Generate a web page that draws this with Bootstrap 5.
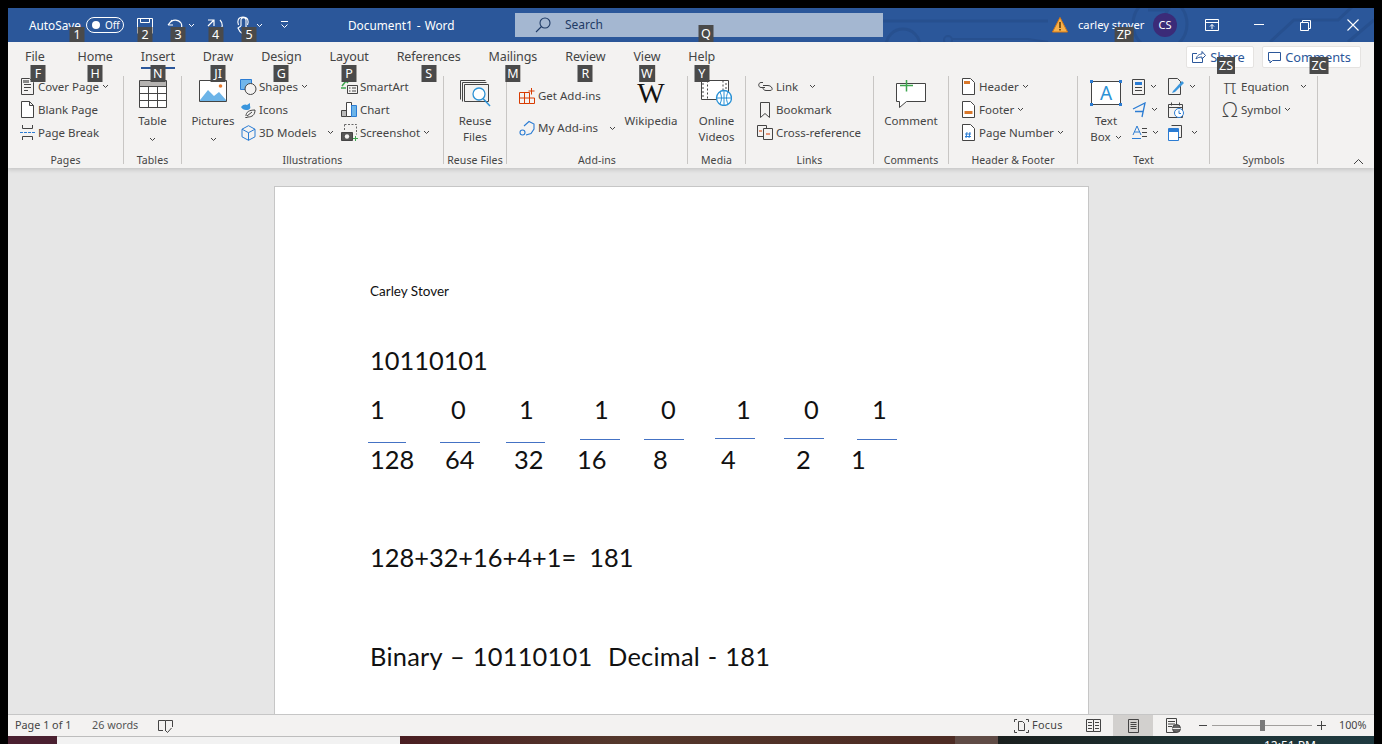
<!DOCTYPE html>
<html lang="en">
<head>
  <meta charset="UTF-8" />
  <meta name="viewport" content="width=device-width, initial-scale=1" />
  <title>Document1 - Word</title>
  <link href="https://cdn.jsdelivr.net/npm/bootstrap@5.3.0/dist/css/bootstrap.min.css" rel="stylesheet" />
  <style>
    html, body { height: 100%; }
    body { margin: 0; background: #000; overflow: hidden; font-family: "Noto Sans", "Open Sans", sans-serif; font-size: 11.5px; color: #444; }
    svg { display: block; flex: none; }
    .word-win { height: 744px; padding: 8px 8px 0; display: flex; flex-direction: column; }

    /* title bar */
    .title-bar { height: 34px; background: #2b579a; color: #fff; position: relative; flex: none; font-size: 11.8px; }
    .title-art { position: absolute; inset: 0; }
    .title-left { width: 507px; flex: none; height: 34px; position: relative; padding-left: 21px; }
    .auto-save { width: 57px; height: 34px; line-height: 34px; position: relative; }
    .off-pill { width: 38px; height: 16px; border: 1px solid #fff; border-radius: 8px; display: flex; align-items: center; gap: 5px; padding-left: 5px; font-size: 10px; line-height: 1; }
    .off-dot { width: 8px; height: 8px; border-radius: 50%; background: #fff; }
    .qat-item { position: relative; height: 34px; display: flex; align-items: center; gap: 5px; }
    .qat-save { margin-left: 13px; }
    .qat-undo { margin-left: 14px; }
    .qat-redo { margin-left: 12px; }
    .qat-touch { margin-left: 11px; }
    .qat-more { margin-left: 17px; }
    .doc-name { position: absolute; left: 340px; top: 0; line-height: 34px; word-spacing: -1px; }
    .search-box { width: 368px; flex: none; height: 24px; margin-top: 5px; background: #a4b7d1; color: #1f3b66; position: relative; display: flex; align-items: center; padding-left: 20px; gap: 14px; font-size: 12px; }
    .title-right { flex: 1; position: relative; height: 34px; }
    .warn-ico { margin-left: 169px; }
    .user-name { margin-left: 10px; width: 65px; height: 34px; line-height: 34px; white-space: nowrap; position: relative; font-size: 11.2px; }
    .user-chip { width: 24px; height: 24px; border-radius: 50%; background: #3b2b78; font-size: 11px; display: flex; align-items: center; justify-content: center; margin-left: 10px; margin-right: 28px; }
    .win-min { margin-left: 35px; }
    .win-max, .win-close { margin-left: 36px; }

    /* key tips */
    .ktip { position: absolute; left: 50%; transform: translateX(-50%); min-width: 15px; height: 16px; padding: 0 2px; background: #4a4a4a; color: #fff; font-size: 12.5px; line-height: 16px; text-align: center; z-index: 5; }
    .ktip-qat { top: 19px; height: 15px; line-height: 15px; }
    .ktip-auto { left: 48px; }
    .ktip-undo { left: 11px; }
    .ktip-touch { left: 14px; }
    .ktip-search { left: 191px; top: 12px; height: 17px; line-height: 17px; }
    .ktip-user { left: 46px; top: 19px; height: 15px; line-height: 15px; font-size: 12.5px; }
    .ktip-share { left: 39px; top: 10px; height: 17px; line-height: 17px; }
    .ktip-comm { left: 56px; top: 10px; height: 17px; line-height: 17px; }

    /* ribbon */
    .word-ribbon { height: 126px; background: #f3f2f1; flex: none; position: relative; box-shadow: 0 2px 4px rgba(0,0,0,.14); z-index: 2; }
    .tab-row { height: 34px; padding-left: 3px; }
    .tab-row .nav-item { position: relative; padding: 0 14px; height: 34px; line-height: 30px; font-size: 12.5px; color: #444; letter-spacing: -.1px; }
    .tab-row .nav-item:first-child { padding-right: 19px; }
    .tab-row .tab-on::after { content: ""; position: absolute; left: 14px; right: 14px; top: 25px; height: 2px; background: #2b579a; }
    .tab-row .ktip { top: 23px; height: 17px; line-height: 17px; letter-spacing: 0; }
    .tab-row .nav-item:first-child .ktip { left: 27px; }
    .top-btn { position: absolute; top: 4px; height: 22px; padding: 0; background: #fff; border: 1px solid #e5e3e1; border-radius: 2px; color: #2b579a; font-size: 12.8px; line-height: 20px; display: flex; align-items: center; justify-content: center; gap: 4px; }
    .top-btn:hover { background: #fff; color: #2b579a; }
    .btn-share { left: 1178px; width: 68px; }
    .btn-comm { left: 1254px; width: 99px; }
    .group-row { height: 88px; }
    .rgroup { display: flex; flex-direction: column; border-right: 1px solid #c8c6c4; flex: none; }
    .rgroup-body { flex: 1; display: flex; min-height: 0; }
    .rgroup-name { height: 16px; margin-bottom: -4px; line-height: 16px; text-align: center; font-size: 10.5px; color: #444; letter-spacing: .1px; }
    .g-pages { width: 116px; } .g-pages .rgroup-body { padding-left: 11px; }
    .g-tables { width: 58px; }
    .g-illus { width: 262px; } .g-illus .rgroup-body { padding-left: 10px; }
    .g-reuse { width: 63px; }
    .g-addins { width: 181px; } .g-addins .rgroup-body { padding-left: 12px; }
    .g-media { width: 58px; }
    .g-links { width: 128px; } .g-links .rgroup-body { padding-left: 11px; }
    .g-comm { width: 75px; }
    .g-head { width: 129px; } .g-head .rgroup-body { padding-left: 11px; }
    .g-text { width: 132px; } .g-text .rgroup-body { padding-left: 13px; }
    .g-symb { width: 108px; } .g-symb .rgroup-body { padding-left: 12px; }

    .small-col { display: flex; flex-direction: column; margin-top: -1px; }
    .small-btn { height: 23px; display: flex; align-items: center; white-space: nowrap; gap: 3px; }
    .ico-slot { width: 16px; height: 23px; display: flex; align-items: center; justify-content: center; flex: none; }
    .big-btn { display: flex; flex-direction: column; align-items: center; flex: 1; line-height: 16px; }
    .big-ico { height: 37px; display: flex; align-items: flex-start; justify-content: center; padding-top: 4px; }
    .col-shapes { width: 101px; margin-left: 6px; }
    .col-pictures { flex: none; width: 42px; }
    .addin-col { width: 101px; padding-top: 8px; }
    .addin-row { height: 24px; display: flex; align-items: center; gap: 3px; white-space: nowrap; }
    .addin-row + .addin-row { margin-top: 8px; }
    .col-wiki { flex: none; width: 62px; }
    .wiki-w { font-family: "Liberation Serif", serif; font-size: 29px; line-height: 28px; color: #111; height: 37px; padding-top: 3px; }
    .col-textbox { flex: none; width: 30px; }
    .tool-col { margin-left: 11px; width: 25px; } .tool-col + .tool-col { margin-left: 11px; width: 30px; }
    .tool-col .small-btn { gap: 5px; }
    .tool-col + .tool-col .small-btn { gap: 4px; }
    .sym-glyph { font-family: "Open Sans", sans-serif; font-size: 21px; line-height: 1; color: #444; font-weight: 300; }
    .collapse-ribbon { position: absolute; right: 10px; bottom: 3px; }

    /* document */
    .doc-area { flex: 1; min-height: 0; background: #e6e6e6; overflow: hidden; padding-top: 18px; display: flex; justify-content: center; padding-right: 19px; position: relative; }
    .doc-page { width: 815px; height: 700px; flex: none; background: #fff; border: 1px solid #c6c6c6; padding: 94px 0 0 95px; position: relative; color: #111; font-family: Lato, "Liberation Sans", sans-serif; }
    .doc-name-line { font-size: 13.5px; line-height: 20px; }
    .doc-big { font-size: 25.4px; line-height: 36px; white-space: pre; }
    .mt-first { margin-top: 41px; } .mt-bits { margin-top: 13px; } .mt-vals { margin-top: 14px; } .mt-sum { margin-top: 62px; } .mt-end { margin-top: 63px; letter-spacing: .25px; word-spacing: 1px; }
    .bit-row { display: grid; grid-template-columns: 81px 68px 75px 67px 75px 68px 68px 1fr; }
    .val-row { display: grid; grid-template-columns: 75px 69px 63px 76px 68px 75px 55px 1fr; }
    .doc-rules { position: absolute; left: 1px; top: 1px; }

    /* status bar */
    .status-bar { height: 22px; flex: none; background: #f3f2f1; border-top: 1px solid #c6c6c6; font-size: 10.8px; color: #444; position: relative; }
    .st-pages { margin-left: 7px; width: 77px; }
    .st-words { width: 66px; color: #555; }
    .st-right { margin-left: auto; height: 21px; padding-right: 5px; }
    .st-focus { gap: 3px; width: 72px; letter-spacing: .3px; }
    .st-read { width: 27px; }
    .st-print { width: 40px; height: 21px; background: #d2d0ce; display: flex; align-items: center; justify-content: center; }
    .st-web { width: 46px; padding-left: 13px; }
    .zoom-rail { width: 100px; height: 1px; background: #a19f9d; margin: 0 5px; position: relative; }
    .zoom-thumb { position: absolute; left: 48px; top: -5px; width: 5px; height: 11px; background: #7a7a7a; }
    .st-pct { margin-left: 13px; width: 30px; }

    /* taskbar */
    .task-strip { height: 8px; flex: none; display: flex; overflow: hidden; color: #fff; }
    .ts-a { width: 49px; background: #4a2030; }
    .ts-b { width: 343px; background: #f2f2f2; border-top: 1px solid #bdbdbd; }
    .ts-c { width: 555px; background: linear-gradient(90deg, #4a1e22, #54382c 40%, #4d2c24 90%); }
    .ts-d { width: 43px; background: #5f4b45; }
    .ts-e { flex: 1; background: linear-gradient(90deg, #1a1f1e, #1c2f30 45%, #1f3a40); position: relative; }
    .ts-clock { position: absolute; left: 266px; top: 3px; font-size: 12px; line-height: 14px; white-space: nowrap; }
  </style>
</head>
<body>
<div class="word-win">

  <!-- title bar -->
  <div class="title-bar d-flex">
    <svg class="title-art" width="1366" height="34" fill="none" stroke="#27508f" stroke-width="3">
      <path d="M875 13H1040" />
      <circle cx="895" cy="38" r="17" />
      <circle cx="940" cy="32" r="4" stroke-width="2" />
      <path d="M944 31H1020L1040 34" stroke-width="2" />
      <circle cx="1152" cy="16" r="27" />
      <path d="M1140 2H1160L1148 20" />
      <path d="M1262 34L1286 12H1330L1345 -2" />
      <path d="M1340 34L1366 12" />
    </svg>
    <div class="title-left d-flex align-items-center">
      <div class="auto-save">AutoSave<span class="ktip ktip-qat ktip-auto">1</span></div>
      <div class="off-pill"><span class="off-dot"></span><span>Off</span></div>
      <div class="qat-item qat-save">
        <svg width="16" height="17" fill="none" stroke="#fff"><path d="M.5 1.500H15.500V16.500M.5 1.500V16.500M3.500 1.500V5.500H12.500V1.500" /></svg>
        <span class="ktip ktip-qat">2</span>
      </div>
      <div class="qat-item qat-undo">
        <svg width="16" height="14" fill="none" stroke="#fff" stroke-width="1.2"><path d="M1 7L5 2M1 7H6M2 6C5 1 11 1 14 5C15 7 15 9 14 11" /></svg>
        <svg width="7" height="5" fill="none" stroke="#fff"><path d="M1 1L3.500 3.500L6 1" /></svg>
        <span class="ktip ktip-qat ktip-undo">3</span>
      </div>
      <div class="qat-item qat-redo">
        <svg width="17" height="15" fill="none" stroke="#fff" stroke-width="1.2"><path d="M1 2H7V8M7 2L1 8M13 2C16 5 16 10 13 13" /></svg>
        <span class="ktip ktip-qat">4</span>
      </div>
      <div class="qat-item qat-touch">
        <svg width="16" height="19" fill="none" stroke="#fff" stroke-width="1.1"><path d="M6 10V4C6 1 11 1 11 4V11M3.500 9C2 5 3 1 8 1S14 5 12.500 9M6 10L3 12C4 15 6 17 8 18M11 11L14 12L13 17" /></svg>
        <svg width="7" height="5" fill="none" stroke="#fff"><path d="M1 1L3.500 3.500L6 1" /></svg>
        <span class="ktip ktip-qat ktip-touch">5</span>
      </div>
      <div class="qat-item qat-more">
        <svg width="9" height="8" fill="none" stroke="#fff"><path d="M1 .5H8M1.500 3.500L4.500 6.500L7.500 3.500" /></svg>
      </div>
      <div class="doc-name">Document1 &nbsp;-&nbsp; Word</div>
    </div>
    <div class="search-box">
      <svg width="16" height="16" fill="none" stroke="#1f3b66" stroke-width="1.100"><circle cx="10" cy="6" r="5" /><path d="M6.500 9.500L1 15" /></svg>
      <span>Search</span>
      <span class="ktip ktip-search">Q</span>
    </div>
    <div class="title-right d-flex align-items-center">
      <svg class="warn-ico" width="16" height="16"><path d="M8 .5L15.500 15H.5Z" fill="#f7b14c" stroke="#d97a12" /><path d="M7.300 5H8.700V11H7.300ZM7.300 12H8.700V13.500H7.300Z" fill="#4a2d00" /></svg>
      <div class="user-name">carley stover<span class="ktip ktip-user">ZP</span></div>
      <div class="user-chip">CS</div>
      <svg width="14" height="12" fill="none" stroke="#fff"><path d="M.5 .5H13.500V11.500H.5ZM.5 3.500H13.500M7 10V5.500M5 7.500L7 5.500L9 7.500" /></svg>
      <svg class="win-min" width="10" height="2" fill="none" stroke="#fff"><path d="M0 .5H10" /></svg>
      <svg class="win-max" width="11" height="11" fill="none" stroke="#fff"><path d="M.5 2.500H8.500V10.500H.5ZM2.500 2.500V.5H10.500V8.500H8.500" /></svg>
      <svg class="win-close" width="12" height="12" fill="none" stroke="#fff" stroke-width="1.100"><path d="M.5 .5L11.500 11.500M11.500 .5L.5 11.500" /></svg>
    </div>
  </div>

  <!-- ribbon -->
  <div class="word-ribbon">
    <ul class="nav tab-row list-unstyled m-0">
      <li class="nav-item">File<span class="ktip">F</span></li>
      <li class="nav-item">Home<span class="ktip">H</span></li>
      <li class="nav-item tab-on">Insert<span class="ktip">N</span></li>
      <li class="nav-item">Draw<span class="ktip">JI</span></li>
      <li class="nav-item">Design<span class="ktip">G</span></li>
      <li class="nav-item">Layout<span class="ktip">P</span></li>
      <li class="nav-item">References<span class="ktip">S</span></li>
      <li class="nav-item">Mailings<span class="ktip">M</span></li>
      <li class="nav-item">Review<span class="ktip">R</span></li>
      <li class="nav-item">View<span class="ktip">W</span></li>
      <li class="nav-item">Help<span class="ktip">Y</span></li>
    </ul>
    <button class="btn top-btn btn-share">
      <svg width="15" height="14" fill="none" stroke="#2b579a"><path d="M6 3.500H1.500V12.500H11.500V8M5 9C6 5 9 4 11 4V1.500L14.500 5.500L11 9V7C8 7 6 8 5 9Z" /></svg>
      Share<span class="ktip ktip-share">ZS</span>
    </button>
    <button class="btn top-btn btn-comm">
      <svg width="13" height="13" fill="none" stroke="#2b579a"><path d="M.5 1.500H12.500V9.500H4.500L2 12V9.500H.5Z" /></svg>
      Comments<span class="ktip ktip-comm">ZC</span>
    </button>

    <div class="d-flex group-row">
      <!-- Pages -->
      <div class="rgroup g-pages">
        <div class="rgroup-body">
          <div class="small-col">
            <div class="small-btn"><span class="ico-slot"><svg width="13" height="17" fill="none" stroke="#444"><path d="M.5 .5H8.500L12.500 4.500V16.500H.5ZM3 6.500H10M3 9.500H10M3 12.500H7" /><path d="M2 2H8V5H2Z" fill="#888" stroke="none" /></svg></span>Cover Page<svg width="7" height="5" fill="none" stroke="#444"><path d="M1 1L3.500 3.500L6 1" /></svg></div>
            <div class="small-btn"><span class="ico-slot"><svg width="13" height="17" fill="#fff" stroke="#444"><path d="M.5 .5H8.500L12.500 4.500V16.500H.5ZM8.500 .5V4.500H12.500" /></svg></span>Blank Page</div>
            <div class="small-btn"><span class="ico-slot"><svg width="15" height="15" fill="none" stroke="#444"><path d="M2.500 0V3.500H12.500V0M2.500 15V11.500H12.500V15" /><path d="M0 7.500H15" stroke="#2b7cd3" stroke-dasharray="3 1" /></svg></span>Page Break</div>
          </div>
        </div>
        <div class="rgroup-name">Pages</div>
      </div>
      <!-- Tables -->
      <div class="rgroup g-tables">
        <div class="rgroup-body">
          <div class="big-btn">
            <div class="big-ico"><svg width="28" height="28" fill="#fff" stroke="#444"><path d="M.5 .5H27.500V27.500H.5Z" /><path d="M1 1H27V6H1Z" fill="#b5b3b1" stroke="none" /><path d="M.5 6.500H27.500M.5 13.500H27.500M.5 20.500H27.500M9.500 6.500V27.500M18.500 6.500V27.500" /></svg></div>
            <div>Table</div>
            <svg class="mt-2" width="7" height="5" fill="none" stroke="#444"><path d="M1 1L3.500 3.500L6 1" /></svg>
          </div>
        </div>
        <div class="rgroup-name">Tables</div>
      </div>
      <!-- Illustrations -->
      <div class="rgroup g-illus">
        <div class="rgroup-body">
          <div class="big-btn col-pictures">
            <div class="big-ico"><svg width="28" height="22" fill="#fff" stroke="#444"><path d="M.5 .5H27.500V21.500H.5Z" /><path d="M1 20L9 10L15 16L20 12L27 20V21H1Z" fill="#6cb4e8" stroke="none" /><circle cx="21.500" cy="6" r="1.800" fill="#e8792b" stroke="none" /></svg></div>
            <div>Pictures</div>
            <svg class="mt-2" width="7" height="5" fill="none" stroke="#444"><path d="M1 1L3.500 3.500L6 1" /></svg>
          </div>
          <div class="small-col col-shapes">
            <div class="small-btn"><span class="ico-slot"><svg width="17" height="16" fill="none"><path d="M.5 .5H11.500V10.500H.5Z" fill="#71b6ea" stroke="#2b7cd3" /><circle cx="10.500" cy="10" r="5.500" fill="#f3f2f1" stroke="#444" /></svg></span>Shapes<svg width="7" height="5" fill="none" stroke="#444"><path d="M1 1L3.500 3.500L6 1" /></svg></div>
            <div class="small-btn"><span class="ico-slot"><svg width="16" height="16" fill="none"><path d="M1 5C3 2 6 2 7 3L10 1L10 4C11 6 10 8 6 8C4 8 2 7 1 5Z" fill="#3a96dd" /><path d="M6 14C6 10 9 8 15 8C15 13 12 15 8 15L5 16M7 14L12 10" stroke="#444" /></svg></span>Icons</div>
            <div class="small-btn"><span class="ico-slot"><svg width="15" height="16" fill="none" stroke="#2b7cd3"><path d="M7.500 .7L14 4.200V11.800L7.500 15.300L1 11.800V4.200ZM1 4.200L7.500 7.700L14 4.200M7.500 7.700V15.300" /></svg></span>3D Models<svg class="ms-2" width="7" height="5" fill="none" stroke="#444"><path d="M1 1L3.500 3.500L6 1" /></svg></div>
          </div>
          <div class="small-col">
            <div class="small-btn"><span class="ico-slot"><svg width="17" height="14" fill="none"><path d="M1 6L5 1L7 3" stroke="#3da64e" stroke-width="1.500" /><path d="M0 8H5" stroke="#3da64e" stroke-width="1.500" /><path d="M6.500 5.500H16.500V13.500H6.500ZM8 8H9.500M8 11H9.500M11 8H15M11 11H15" stroke="#444" fill="#f3f2f1" /></svg></span>SmartArt</div>
            <div class="small-btn"><span class="ico-slot"><svg width="16" height="15" fill="none" stroke="#444"><path d="M.5 8.500H5.500V14.500H.5Z" fill="#bbb" /><path d="M5.500 .5H10.500V14.500H5.500Z" fill="#fff" /><path d="M10.500 3.500H15.500V14.500H10.500Z" fill="#6cb4e8" stroke="#2b7cd3" /></svg></span>Chart</div>
            <div class="small-btn"><span class="ico-slot"><svg width="17" height="17" fill="none"><path d="M3.500 .5H15.500V10.500" stroke="#666" stroke-dasharray="2 1.500" /><path d="M3.500 .5V6" stroke="#666" stroke-dasharray="2 1.500" /><path d="M.5 8.500H11.500V16.500H.5Z" fill="#555" stroke="#444" /><circle cx="6" cy="12.500" r="2.200" fill="#f3f2f1" /><path d="M14.500 12V17M12 14.500H17" stroke="#3da64e" /></svg></span>Screenshot<svg width="7" height="5" fill="none" stroke="#444"><path d="M1 1L3.500 3.500L6 1" /></svg></div>
          </div>
        </div>
        <div class="rgroup-name">Illustrations</div>
      </div>
      <!-- Reuse Files -->
      <div class="rgroup g-reuse">
        <div class="rgroup-body">
          <div class="big-btn">
            <div class="big-ico"><svg width="31" height="27" fill="none"><path d="M.5 .5H25.500M.5 .5V19.500M2.500 2.500H26.500M2.500 2.500V21.500" stroke="#444" /><path d="M4.500 4.500H28.500V21.500H4.500Z" stroke="#444" fill="#f3f2f1" /><circle cx="19" cy="14" r="6" stroke="#2b92d6" stroke-width="1.300" fill="#fff" /><path d="M23 18.500L30 26" stroke="#2b92d6" stroke-width="1.500" /></svg></div>
            <div>Reuse</div><div>Files</div>
          </div>
        </div>
        <div class="rgroup-name">Reuse Files</div>
      </div>
      <!-- Add-ins -->
      <div class="rgroup g-addins">
        <div class="rgroup-body">
          <div class="addin-col">
            <div class="addin-row"><svg width="16" height="16" fill="none" stroke="#d83b01"><path d="M.5 4.500H10.500V15.500H.5ZM.5 10H15.500V15.500H10.500M5.500 4.500V15.500M12.500 0V6.500M9.500 3H15.500" /></svg>Get Add-ins</div>
            <div class="addin-row"><svg width="16" height="16" fill="none" stroke="#2b7cd3" stroke-width="1.100"><path d="M5 6L10 1.500L15 4V9L12 13.500L7 15" /><circle cx="3.500" cy="12.500" r="2.500" /></svg>My Add-ins<svg class="ms-2" width="7" height="5" fill="none" stroke="#444"><path d="M1 1L3.500 3.500L6 1" /></svg></div>
          </div>
          <div class="big-btn col-wiki">
            <div class="wiki-w">W</div>
            <div>Wikipedia</div>
          </div>
        </div>
        <div class="rgroup-name">Add-ins</div>
      </div>
      <!-- Media -->
      <div class="rgroup g-media">
        <div class="rgroup-body">
          <div class="big-btn">
            <div class="big-ico"><svg width="31" height="26" fill="none"><path d="M.5 .5H27.500V19.500H.5Z" stroke="#444" fill="#fff" /><path d="M2 3V18M6.500 .5V19.500M22 .5V19.500M25 3V18" stroke="#444" stroke-dasharray="2 2" /><circle cx="23" cy="18" r="7.500" fill="#fff" stroke="#2b92d6" stroke-width="1.300" /><path d="M15.500 18H30.500M23 10.500V25.500M19 12C21 16 21 20 19 24M27 12C25 16 25 20 27 24" stroke="#2b92d6" /></svg></div>
            <div>Online</div><div>Videos</div>
          </div>
        </div>
        <div class="rgroup-name">Media</div>
      </div>
      <!-- Links -->
      <div class="rgroup g-links">
        <div class="rgroup-body">
          <div class="small-col">
            <div class="small-btn"><span class="ico-slot"><svg width="17" height="11" fill="none" stroke="#444"><path d="M6 1.500H4C1 1.500 1 6.500 4 6.500H8" /><path d="M6 4.500H11C15 4.500 17 9.500 13 9.500H9C7 9.500 6 8 6 7" /></svg></span>Link<svg class="ms-2" width="7" height="5" fill="none" stroke="#444"><path d="M1 1L3.500 3.500L6 1" /></svg></div>
            <div class="small-btn"><span class="ico-slot"><svg width="10" height="16" fill="none" stroke="#444"><path d="M.5 .5H9.500V15.500L5 11.500L.5 15.500Z" /></svg></span>Bookmark</div>
            <div class="small-btn"><span class="ico-slot"><svg width="16" height="15" fill="none"><path d="M.5 .5H9.500V11.500H.5Z" stroke="#444" /><path d="M6.500 3.500H15.500V14.500H6.500Z" stroke="#444" fill="#f3f2f1" /><path d="M2 6H5M9 9H13" stroke="#d83b01" /></svg></span>Cross-reference</div>
          </div>
        </div>
        <div class="rgroup-name">Links</div>
      </div>
      <!-- Comments -->
      <div class="rgroup g-comm">
        <div class="rgroup-body">
          <div class="big-btn">
            <div class="big-ico"><svg width="30" height="28" fill="none"><path d="M.5 3.500H29.500V21.500H10.500L3.500 27.500V21.500H.5Z" stroke="#444" fill="#fff" /><path d="M10.500 0V11.500M4 5.500H17" stroke="#3da64e" stroke-width="1.500" /></svg></div>
            <div>Comment</div>
          </div>
        </div>
        <div class="rgroup-name">Comments</div>
      </div>
      <!-- Header & Footer -->
      <div class="rgroup g-head">
        <div class="rgroup-body">
          <div class="small-col">
            <div class="small-btn"><span class="ico-slot"><svg width="13" height="17" fill="#fff" stroke="#444"><path d="M.5 .5H8.500L12.500 4.500V16.500H.5Z" /><path d="M2 3H8V6H2Z" fill="#d9782b" stroke="none" /></svg></span>Header<svg width="7" height="5" fill="none" stroke="#444"><path d="M1 1L3.500 3.500L6 1" /></svg></div>
            <div class="small-btn"><span class="ico-slot"><svg width="13" height="17" fill="#fff" stroke="#444"><path d="M.5 .5H8.500L12.500 4.500V16.500H.5Z" /><path d="M2.500 10H10.500V13H2.500Z" fill="#d9782b" stroke="none" /></svg></span>Footer<svg width="7" height="5" fill="none" stroke="#444"><path d="M1 1L3.500 3.500L6 1" /></svg></div>
            <div class="small-btn"><span class="ico-slot"><svg width="13" height="17" fill="#fff" stroke="#444"><path d="M.5 .5H8.500L12.500 4.500V16.500H.5Z" /><path d="M5 8L4 14M8 8L7 14M3 10H9M3 12.500H9" stroke="#2b7cd3" fill="none" /></svg></span>Page Number<svg width="7" height="5" fill="none" stroke="#444"><path d="M1 1L3.500 3.500L6 1" /></svg></div>
          </div>
        </div>
        <div class="rgroup-name">Header &amp; Footer</div>
      </div>
      <!-- Text -->
      <div class="rgroup g-text">
        <div class="rgroup-body">
          <div class="big-btn col-textbox">
            <div class="big-ico"><svg width="32" height="26" fill="none"><path d="M1.500 1.500H30.500V24.500H1.500Z" stroke="#444" fill="#fff" /><text x="16" y="20" text-anchor="middle" font-family="Noto Sans, sans-serif" font-size="19" fill="#2b92d6">A</text><path d="M0 0H3V3H0ZM29 0H32V3H29ZM0 23H3V26H0ZM29 23H32V26H29Z" fill="#2b7cd3" /></svg></div>
            <div>Text</div>
            <div class="d-flex align-items-center gap-1">Box<svg width="7" height="5" fill="none" stroke="#444"><path d="M1 1L3.500 3.500L6 1" /></svg></div>
          </div>
          <div class="small-col tool-col">
            <div class="small-btn"><svg width="13" height="16" fill="none" stroke="#444"><path d="M.5 .5H12.500V15.500H.5Z" /><path d="M3 3H10V6H3Z" fill="#2b7cd3" stroke="none" /><path d="M3 8.500H10M3 11.500H10" /></svg><svg width="7" height="5" fill="none" stroke="#444"><path d="M1 1L3.500 3.500L6 1" /></svg></div>
            <div class="small-btn"><svg width="14" height="16" fill="none" stroke="#2b7cd3" stroke-width="1.300"><path d="M1 7L13 1L10 15M3 9.500H11" /></svg><svg width="7" height="5" fill="none" stroke="#444"><path d="M1 1L3.500 3.500L6 1" /></svg></div>
            <div class="small-btn"><svg width="15" height="15" fill="none"><path d="M1 10L5 1L9 10M2.500 7H7.500" stroke="#2b7cd3" /><path d="M0 13.500H9" stroke="#2b7cd3" /><path d="M10 3.500H15M10 7.500H15M10 11.500H15" stroke="#444" /></svg><svg width="7" height="5" fill="none" stroke="#444"><path d="M1 1L3.500 3.500L6 1" /></svg></div>
          </div>
          <div class="small-col tool-col">
            <div class="small-btn"><svg width="17" height="17" fill="none"><path d="M.5 .5H9.500L12.500 3.500V16.500H.5Z" stroke="#444" /><path d="M5 13L14 3L16 5L7 14L4 15Z" fill="#3a96dd" /></svg><svg width="7" height="5" fill="none" stroke="#444"><path d="M1 1L3.500 3.500L6 1" /></svg></div>
            <div class="small-btn"><svg width="16" height="16" fill="none"><path d="M.5 2.500H14.500V15.500H.5ZM.5 5.500H14.500M3.500 .5V3.500M11.500 .5V3.500" stroke="#444" /><circle cx="11" cy="11" r="4.500" fill="#fff" stroke="#2b7cd3" /><path d="M11 8.500V11.500H13" stroke="#2b7cd3" /></svg></div>
            <div class="small-btn"><svg width="15" height="16" fill="none"><path d="M.5 3.500H10.500V15.500H.5Z" stroke="#2b7cd3" fill="#fff" /><path d="M1 4H10V7H1Z" fill="#2b7cd3" /><path d="M3.500 .5H13.500V12.500H10.500" stroke="#444" /></svg><svg class="ms-1" width="7" height="5" fill="none" stroke="#444"><path d="M1 1L3.500 3.500L6 1" /></svg></div>
          </div>
        </div>
        <div class="rgroup-name">Text</div>
      </div>
      <!-- Symbols -->
      <div class="rgroup g-symb">
        <div class="rgroup-body">
          <div class="small-col">
            <div class="small-btn"><span class="ico-slot sym-glyph">π</span>Equation<svg class="ms-2" width="7" height="5" fill="none" stroke="#444"><path d="M1 1L3.500 3.500L6 1" /></svg></div>
            <div class="small-btn"><span class="ico-slot sym-glyph">Ω</span>Symbol<svg width="7" height="5" fill="none" stroke="#444"><path d="M1 1L3.500 3.500L6 1" /></svg></div>
          </div>
        </div>
        <div class="rgroup-name">Symbols</div>
      </div>
    </div>
    <svg class="collapse-ribbon" width="11" height="7" fill="none" stroke="#444"><path d="M1 6L5.500 1.500L10 6" /></svg>
  </div>

  <!-- document -->
  <div class="doc-area">
    <div class="doc-page">
      <svg class="doc-rules" width="813" height="300" stroke="#4472c4" stroke-width="1">
        <path d="M92 254.500H130M164 254.500H204M230 254.500H269M304 251.500H344M368 251.500H408M439 250.500H479M508 250.500H548M581 251.500H621" />
      </svg>
      <div class="doc-name-line">Carley Stover</div>
      <div class="doc-big mt-first">10110101</div>
      <div class="doc-big bit-row mt-bits"><span>1</span><span>0</span><span>1</span><span>1</span><span>0</span><span>1</span><span>0</span><span>1</span></div>
      <div class="doc-big val-row mt-vals"><span>128</span><span>64</span><span>32</span><span>16</span><span>8</span><span>4</span><span>2</span><span>1</span></div>
      <div class="doc-big mt-sum">128+32+16+4+1=  181</div>
      <div class="doc-big mt-end">Binary – 10110101  Decimal - 181</div>
    </div>
  </div>

  <!-- status bar -->
  <div class="status-bar d-flex align-items-center">
    <div class="st-pages">Page 1 of 1</div>
    <div class="st-words">26 words</div>
    <svg width="15" height="14" fill="none" stroke="#444"><path d="M.5 1.500H7.500V12M7.500 1.500H14.500V8M.5 1.500V11.500H5" /><path d="M7 11L9.500 13.500L13.500 9" /></svg>
    <div class="st-right d-flex align-items-center">
      <div class="st-focus d-flex align-items-center">
        <svg width="15" height="14" fill="none" stroke="#444"><path d="M.5 3V.5H3M12 .5H14.500V3M.5 11V13.500H3M12 13.500H14.500V11" /><path d="M4.500 2.500H8.500L10.500 4.500V11.500H4.500Z" /></svg>
        Focus
      </div>
      <div class="st-read"><svg width="15" height="13" fill="none" stroke="#444"><path d="M.5 .5H7.500V12.500H.5ZM7.500 .5H14.500V12.500H7.500ZM2 3.500H6M2 6.500H6M2 9.500H6M9 3.500H13M9 6.500H13M9 9.500H13" /></svg></div>
      <div class="st-print"><svg width="11" height="14" fill="none" stroke="#444"><path d="M.5 .5H10.500V13.500H.5ZM2.500 3.500H8.500M2.500 5.500H8.500M2.500 7.500H8.500M2.500 9.500H8.500" /></svg></div>
      <div class="st-web"><svg width="15" height="15" fill="none" stroke="#444"><path d="M.5 .5H10.500V14.500H.5ZM2 3.500H9M2 6H9M2 8.500H6" /><circle cx="10.500" cy="10.500" r="4" fill="#666" stroke="#444" /><path d="M6.500 10.500H14.500" stroke="#f3f2f1" /></svg></div>
      <svg width="8" height="1" stroke="#444"><path d="M0 .5H8" /></svg>
      <div class="zoom-rail"><span class="zoom-thumb"></span></div>
      <svg width="9" height="9" stroke="#444"><path d="M0 4.500H9M4.500 0V9" /></svg>
      <div class="st-pct">100%</div>
    </div>
  </div>

  <div class="task-strip">
    <div class="ts-a"></div><div class="ts-b"></div><div class="ts-c"></div><div class="ts-d"></div>
    <div class="ts-e"><span class="ts-clock">12:51 PM</span></div>
  </div>
</div>
</body>
</html>
